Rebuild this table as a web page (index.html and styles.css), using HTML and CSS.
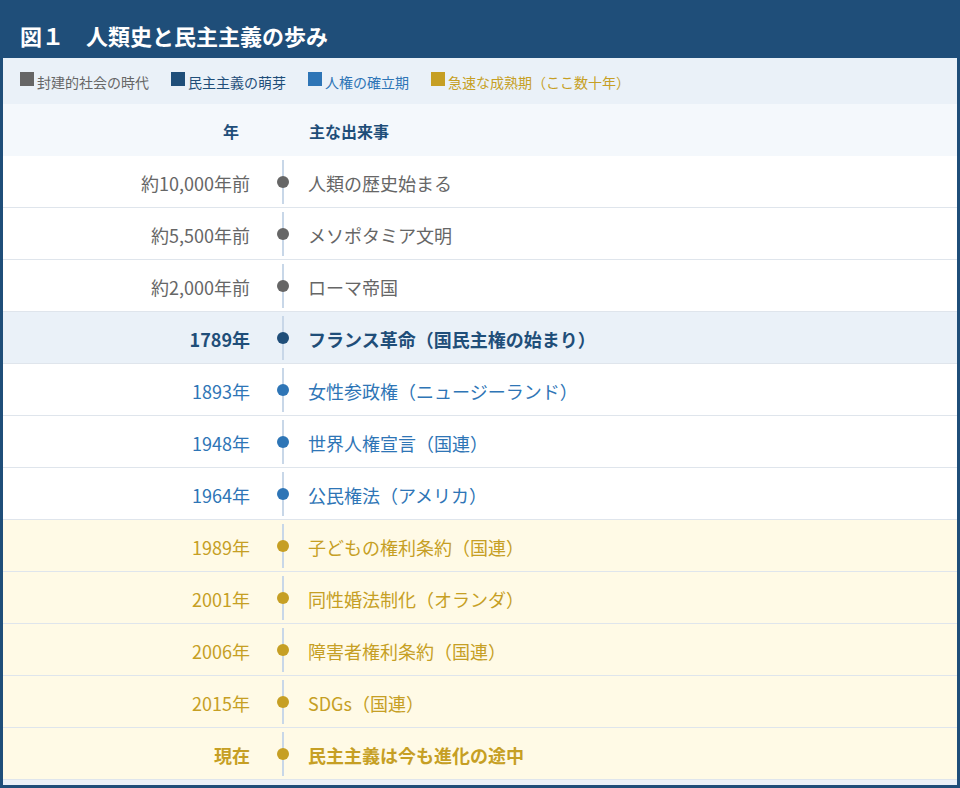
FILE: index.html
```html
<!DOCTYPE html>
<html lang="ja">
<head>
<meta charset="utf-8">
<title>図１ 人類史と民主主義の歩み</title>
<link rel="stylesheet" href="styles.css">
</head>
<body>
<div class="figure">
  <h1 class="title">図１　人類史と民主主義の歩み</h1>
  <div class="legend">
    <span class="legend-item c-feudal"><i class="sw"></i>封建的社会の時代</span>
    <span class="legend-item c-dawn"><i class="sw"></i>民主主義の萌芽</span>
    <span class="legend-item c-rights"><i class="sw"></i>人権の確立期</span>
    <span class="legend-item c-mature"><i class="sw"></i>急速な成熟期（ここ数十年）</span>
  </div>
  <div class="row head">
    <div class="year">年</div>
    <div class="tl"></div>
    <div class="event">主な出来事</div>
  </div>
  <div class="row c-feudal">
    <div class="year">約10,000年前</div>
    <div class="tl"><span class="line"></span><span class="dot"></span></div>
    <div class="event">人類の歴史始まる</div>
  </div>
  <div class="row c-feudal">
    <div class="year">約5,500年前</div>
    <div class="tl"><span class="line"></span><span class="dot"></span></div>
    <div class="event">メソポタミア文明</div>
  </div>
  <div class="row c-feudal">
    <div class="year">約2,000年前</div>
    <div class="tl"><span class="line"></span><span class="dot"></span></div>
    <div class="event">ローマ帝国</div>
  </div>
  <div class="row c-dawn strong bg-blue">
    <div class="year">1789年</div>
    <div class="tl"><span class="line"></span><span class="dot"></span></div>
    <div class="event">フランス革命（国民主権の始まり）</div>
  </div>
  <div class="row c-rights">
    <div class="year">1893年</div>
    <div class="tl"><span class="line"></span><span class="dot"></span></div>
    <div class="event">女性参政権（ニュージーランド）</div>
  </div>
  <div class="row c-rights">
    <div class="year">1948年</div>
    <div class="tl"><span class="line"></span><span class="dot"></span></div>
    <div class="event">世界人権宣言（国連）</div>
  </div>
  <div class="row c-rights">
    <div class="year">1964年</div>
    <div class="tl"><span class="line"></span><span class="dot"></span></div>
    <div class="event">公民権法（アメリカ）</div>
  </div>
  <div class="row c-mature bg-gold">
    <div class="year">1989年</div>
    <div class="tl"><span class="line"></span><span class="dot"></span></div>
    <div class="event">子どもの権利条約（国連）</div>
  </div>
  <div class="row c-mature bg-gold">
    <div class="year">2001年</div>
    <div class="tl"><span class="line"></span><span class="dot"></span></div>
    <div class="event">同性婚法制化（オランダ）</div>
  </div>
  <div class="row c-mature bg-gold">
    <div class="year">2006年</div>
    <div class="tl"><span class="line"></span><span class="dot"></span></div>
    <div class="event">障害者権利条約（国連）</div>
  </div>
  <div class="row c-mature bg-gold">
    <div class="year">2015年</div>
    <div class="tl"><span class="line"></span><span class="dot"></span></div>
    <div class="event">SDGs（国連）</div>
  </div>
  <div class="row c-mature bg-gold strong">
    <div class="year">現在</div>
    <div class="tl"><span class="line"></span><span class="dot"></span></div>
    <div class="event">民主主義は今も進化の途中</div>
  </div>
  <div class="foot"></div>
</div>
</body>
</html>
```

FILE: styles.css
```css
* { box-sizing: border-box; }
html, body {
  margin: 0;
  padding: 0;
  background: #ffffff;
}
body {
  font-family: "Noto Sans CJK JP", "Noto Sans", sans-serif;
}
.figure {
  width: 960px;
  border: 3px solid #1f4e79;
  border-top: 0;
  background: #ffffff;
}
.title {
  height: 58px;
  margin: 0 -3px;
  padding: 17px 0 0 20px;
  background: #1f4e79;
  color: #ffffff;
  font-size: 22px;
  font-weight: 700;
  line-height: 36px;
}
.legend {
  height: 46px;
  background: #eaf1f8;
  display: flex;
  align-items: center;
  gap: 22px;
  padding: 2px 0 0 17px;
  font-size: 14px;
}
.legend-item {
  display: flex;
  align-items: center;
  line-height: 20px;
}
.sw {
  display: inline-block;
  width: 14px;
  height: 14px;
  margin-right: 3px;
  margin-top: -6px;
  background: currentColor;
}
.c-feudal { color: #666666; }
.c-dawn { color: #1f4e79; }
.c-rights { color: #2e75b6; }
.c-mature { color: #c69f24; }

.row {
  display: grid;
  grid-template-columns: 247px 58px 1fr;
  height: 52px;
  border-bottom: 1px solid #dfe5ec;
  font-size: 18px;
}
.row.head {
  background: #f4f8fc;
  border-bottom: 0;
  color: #1f4e79;
  font-size: 16px;
  font-weight: 700;
}
.row.head .year { padding-right: 11px; }
.row.head .event { padding-left: 1px; }
.bg-blue { background: #eaf1f8; }
.bg-gold { background: #fffae6; }
.strong { font-weight: 700; }

.year {
  display: flex;
  align-items: center;
  justify-content: flex-end;
  padding-top: 2px;
}
.event {
  display: flex;
  align-items: center;
  padding-top: 2px;
}
.tl {
  display: grid;
  justify-items: center;
  align-items: center;
  padding: 4px 0 3px 8px;
}
.line {
  grid-area: 1 / 1;
  width: 2px;
  align-self: stretch;
  background: #c8d7e8;
}
.dot {
  grid-area: 1 / 1;
  width: 12px;
  height: 12px;
  border-radius: 50%;
  background: currentColor;
}
.foot {
  height: 5px;
  background: #eaf1f8;
}
```
